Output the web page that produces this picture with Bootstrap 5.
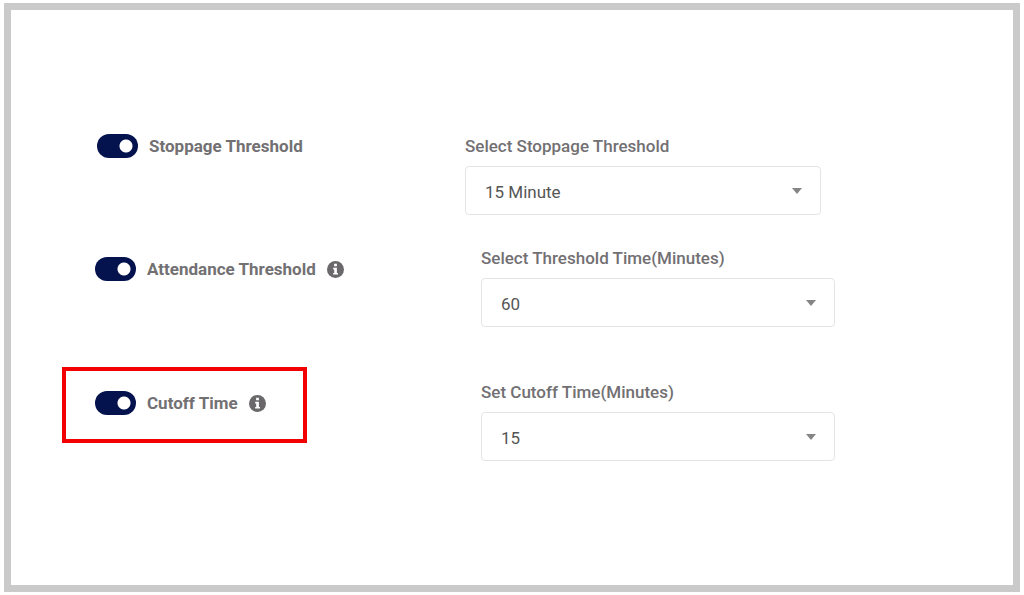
<!DOCTYPE html>
<html lang="en">
<head>
<meta charset="utf-8">
<meta name="viewport" content="width=device-width, initial-scale=1">
<title>Threshold settings</title>
<link href="https://cdn.jsdelivr.net/npm/bootstrap@5.3.0/dist/css/bootstrap.min.css" rel="stylesheet">
<style>
body { font-family: Roboto, "Liberation Sans", sans-serif; color: #727073; background: #fff; padding: 3px 4px; font-size: 17px; line-height: 24px; }
.settings-frame { border: 7px solid #cacaca; min-height: calc(100vh - 6px); padding: 124px 178px 40px 51px; }
.setting-list { gap: 31px; }
.setting { display: grid; grid-template-columns: 419fr 354fr; align-items: start; }
.setting-first { grid-template-columns: 403fr 356fr; padding-right: 14px; }
.toggle-line { gap: 11px; padding-left: 33px; }
.setting-first .toggle-line { padding-left: 35px; }
.toggle-lower { padding-top: 11px; }
.toggle-line label { font-weight: 700; }
.field label { font-weight: 500; }
.form-switch .form-check-input.toggle { width: 41px; height: 24px; margin: 0; float: none; border: 0; background-color: #04124d; background-image: radial-gradient(circle at 29px 12px, #fff 6px, transparent 7px); background-size: 100% 100%; background-position: 0 0; flex: none; }
.form-switch .form-check-input.toggle:not(:checked) { background-color: #bbb; background-image: radial-gradient(circle at 12px 12px, #fff 6px, transparent 7px); }
.setting-last { padding-top: 9px; }
.highlighted { border: 4px solid #f20000; justify-self: start; padding: 20px 37px 24px 29px; }
.field-lower { padding-top: 13px; }
.form-select.picker { height: 49px; padding: 3px 40px 0 19px; border: 1px solid #e4e4e4; border-radius: 4px; color: #555; font-size: 17px; line-height: 24px; background-image: url("data:image/svg+xml,%3Csvg xmlns='http://www.w3.org/2000/svg' viewBox='0 0 10 6'%3E%3Cpath fill='%23858585' d='M0 0h10L5 6z'/%3E%3C/svg%3E"); background-size: 10px 6px; background-position: right 18px center; }
.info-btn { line-height: 0; color: #6a686b; }
</style>
</head>
<body>
<main class="settings-frame">
  <form class="setting-list d-flex flex-column">
    <div class="setting setting-first">
      <div class="toggle-line form-switch d-flex align-items-center">
        <input class="form-check-input toggle" type="checkbox" role="switch" id="stoppage" checked>
        <label for="stoppage">Stoppage Threshold</label>
      </div>
      <div class="field">
        <label class="d-block mb-2" for="stoppageTime">Select Stoppage Threshold</label>
        <select class="form-select picker" id="stoppageTime"><option>15 Minute</option></select>
      </div>
    </div>

    <div class="setting">
      <div class="toggle-line toggle-lower form-switch d-flex align-items-center">
        <input class="form-check-input toggle" type="checkbox" role="switch" id="attendance" checked>
        <label for="attendance">Attendance Threshold</label>
        <button type="button" class="info-btn btn border-0 p-0" aria-label="About attendance threshold">
          <svg width="17" height="17" viewBox="0 0 16 16" aria-hidden="true"><circle cx="8" cy="8" r="8" fill="currentColor"/><path fill="#fff" d="M6.7 2.7h2.6v2.2H6.7zM5.8 6.3h3.5v4.9h1v1.6H5.8v-1.6h1V7.9h-1z"/></svg>
        </button>
      </div>
      <div class="field">
        <label class="d-block mb-2" for="attendanceTime">Select Threshold Time(Minutes)</label>
        <select class="form-select picker" id="attendanceTime"><option>60</option></select>
      </div>
    </div>

    <div class="setting setting-last">
      <div class="toggle-line highlighted form-switch d-flex align-items-center">
        <input class="form-check-input toggle" type="checkbox" role="switch" id="cutoff" checked>
        <label for="cutoff">Cutoff Time</label>
        <button type="button" class="info-btn btn border-0 p-0" aria-label="About cutoff time">
          <svg width="17" height="17" viewBox="0 0 16 16" aria-hidden="true"><circle cx="8" cy="8" r="8" fill="currentColor"/><path fill="#fff" d="M6.7 2.7h2.6v2.2H6.7zM5.8 6.3h3.5v4.9h1v1.6H5.8v-1.6h1V7.9h-1z"/></svg>
        </button>
      </div>
      <div class="field field-lower">
        <label class="d-block mb-2" for="cutoffTime">Set Cutoff Time(Minutes)</label>
        <select class="form-select picker" id="cutoffTime"><option>15</option></select>
      </div>
    </div>
  </form>
</main>
<script src="https://cdn.jsdelivr.net/npm/bootstrap@5.3.0/dist/js/bootstrap.bundle.min.js"></script>
</body>
</html>
